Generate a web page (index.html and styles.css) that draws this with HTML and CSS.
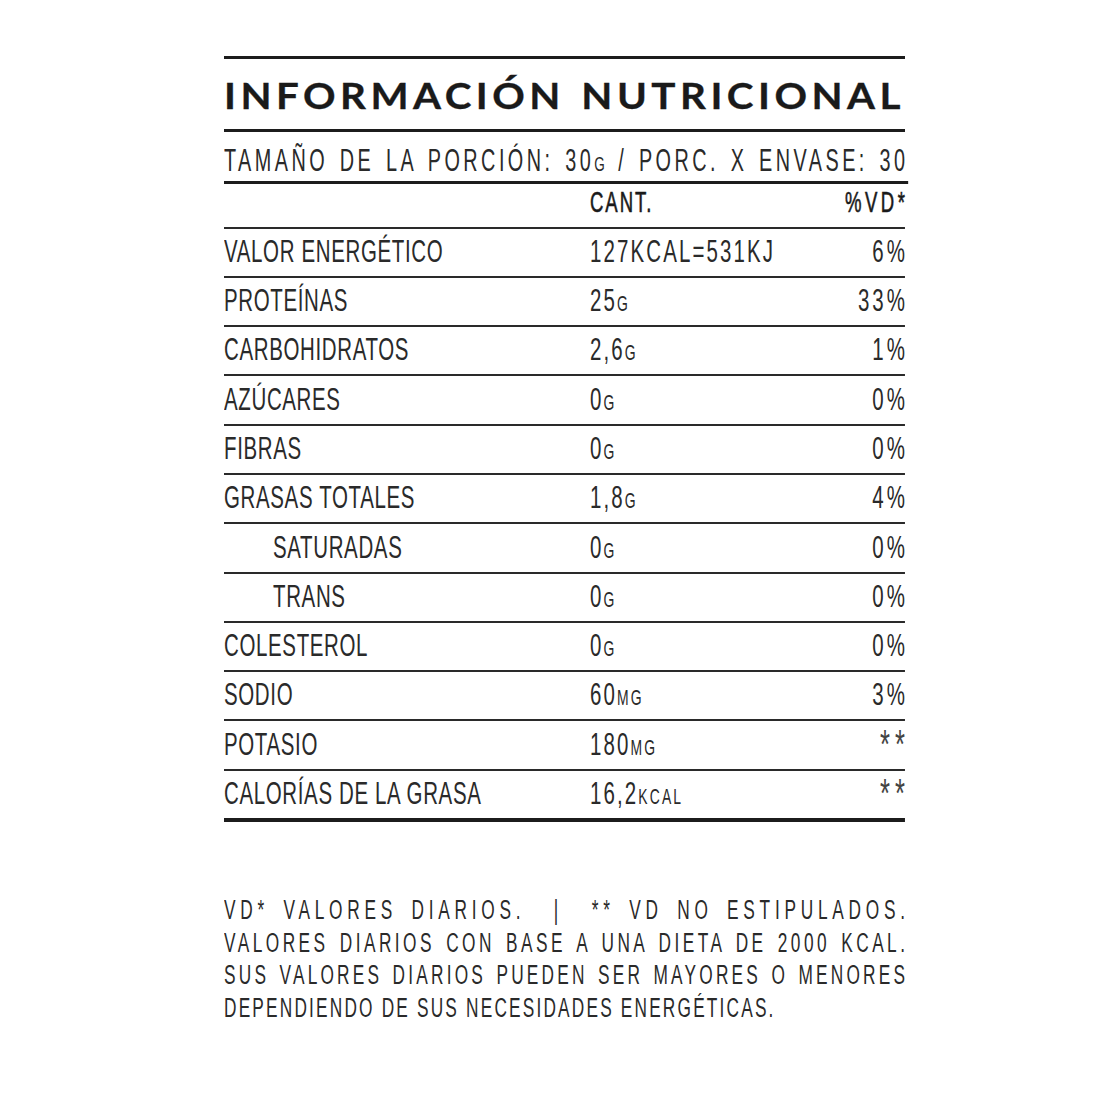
FILE: index.html
```html
<!DOCTYPE html>
<html lang="es">
<head>
<meta charset="utf-8">
<title>Información nutricional</title>
<link rel="stylesheet" href="styles.css">
</head>
<body>
<div class="sheet">
  <h1 class="title"><span class="title-text">INFORMACIÓN NUTRICIONAL</span></h1>
  <div class="cond">
    <p class="serving">TAMAÑO DE LA PORCIÓN: 30<small class="u">G</small> / PORC. X ENVASE: 30</p>
    <div class="head">
      <span></span>
      <span class="h-amt">CANT.</span>
      <span class="h-pct">%VD*</span>
    </div>
    <div class="row"><span class="lbl">VALOR ENERGÉTICO</span><span class="amt">127KCAL=531KJ</span><span class="pct">6%</span></div>
    <div class="row"><span class="lbl">PROTEÍNAS</span><span class="amt">25<small class="u">G</small></span><span class="pct">33%</span></div>
    <div class="row"><span class="lbl">CARBOHIDRATOS</span><span class="amt">2,6<small class="u">G</small></span><span class="pct">1%</span></div>
    <div class="row"><span class="lbl">AZÚCARES</span><span class="amt">0<small class="u">G</small></span><span class="pct">0%</span></div>
    <div class="row"><span class="lbl">FIBRAS</span><span class="amt">0<small class="u">G</small></span><span class="pct">0%</span></div>
    <div class="row"><span class="lbl">GRASAS TOTALES</span><span class="amt">1,8<small class="u">G</small></span><span class="pct">4%</span></div>
    <div class="row"><span class="lbl sub">SATURADAS</span><span class="amt">0<small class="u">G</small></span><span class="pct">0%</span></div>
    <div class="row"><span class="lbl sub">TRANS</span><span class="amt">0<small class="u">G</small></span><span class="pct">0%</span></div>
    <div class="row"><span class="lbl">COLESTEROL</span><span class="amt">0<small class="u">G</small></span><span class="pct">0%</span></div>
    <div class="row"><span class="lbl">SODIO</span><span class="amt">60<small class="u">MG</small></span><span class="pct">3%</span></div>
    <div class="row"><span class="lbl">POTASIO</span><span class="amt">180<small class="u">MG</small></span><span class="pct star">**</span></div>
    <div class="row last"><span class="lbl">CALORÍAS DE LA GRASA</span><span class="amt">16,2<small class="u">KCAL</small></span><span class="pct star">**</span></div>

    <div class="notes">
      <p class="n1">VD* VALORES DIARIOS. <span class="bar">|</span> ** VD NO ESTIPULADOS.</p>
      <p class="n2">VALORES DIARIOS CON BASE A UNA DIETA DE 2000 KCAL.</p>
      <p class="n3">SUS VALORES DIARIOS PUEDEN SER MAYORES O MENORES</p>
      <p class="n4">DEPENDIENDO DE SUS NECESIDADES ENERGÉTICAS.</p>
    </div>
  </div>
</div>
</body>
</html>
```

FILE: styles.css
```css
* { box-sizing: border-box; }

html, body {
  margin: 0;
  padding: 0;
  background: #ffffff;
  overflow-x: hidden;
}

.sheet {
  margin: 56px 0 0 224px;
  width: 681px;
  border-top: 3px solid #1c1c1c;
  color: #2a2a2a;
}

.title {
  margin: 0;
  height: 73px;
  padding-top: 17.6px;
  border-bottom: 3px solid #1c1c1c;
  font-family: Lato, "Open Sans", sans-serif;
  font-weight: 700;
  font-size: 36px;
  line-height: 36px;
  color: #1a1a1a;
}

/* wide geometric look: laid out narrower, stretched to the sheet width */
.title-text {
  display: block;
  width: 608px;
  margin-right: -4px;
  letter-spacing: 4px;
  text-align: justify;
  text-align-last: justify;
  white-space: normal;
  transform: scaleX(1.12);
  transform-origin: 0 0;
  -webkit-text-stroke: 0.3px #1a1a1a;
}

/* condensed block: laid out wide, then narrowed to the sheet width */
.cond {
  width: 1064.06px;
  transform: scaleX(0.64);
  transform-origin: 0 0;
  font-family: "Liberation Sans", Arial, sans-serif;
  font-weight: 400;
}

.u {
  font-size: 0.68em;
}

.serving {
  margin: 0 -5.4px 0 0;
  height: 52px;
  padding-top: 13px;
  border-bottom: 3px solid #1c1c1c;
  font-size: 31px;
  line-height: 31px;
  letter-spacing: 5.4px;
  text-align: justify;
  text-align-last: justify;
}

.serving .u {
  letter-spacing: 3px;
}

.head {
  display: grid;
  grid-template-columns: 571.9px 1fr auto;
  height: 42.5px;
  padding-top: 4px;
  font-size: 29px;
  line-height: 29px;
  color: #1a1a1a;
  -webkit-text-stroke: 0.6px #1a1a1a;
}

.h-amt {
  letter-spacing: 3px;
}

.h-pct {
  letter-spacing: 5.5px;
  margin-right: -5.5px;
}

.row {
  display: grid;
  grid-template-columns: 571.9px 1fr auto;
  height: 49.3px;
  padding-top: 6.3px;
  border-top: 2px solid #2a2a2a;
  font-size: 32px;
  line-height: 32px;
  white-space: nowrap;
}

.row.last {
  height: 53.3px;
  border-bottom: 4px solid #1c1c1c;
}

.lbl {
  letter-spacing: 1px;
}

.lbl.sub {
  padding-left: 76.6px;
}

.amt {
  letter-spacing: 3.3px;
}

.pct {
  letter-spacing: 4.7px;
  margin-right: -4.7px;
  text-align: right;
}

.pct.star {
  font-size: 40px;
  line-height: 32px;
  letter-spacing: 8px;
  margin-right: -8px;
  color: #444;
}

.notes {
  margin-top: 72px;
  font-size: 27px;
  line-height: 32.5px;
}

.notes p {
  margin: 0;
}

.n1 {
  letter-spacing: 7.4px;
  margin-right: -7.4px !important;
  text-align: justify;
  text-align-last: justify;
}

.bar {
  margin: 0 22px;
}

.n2 {
  letter-spacing: 5.4px;
  margin-right: -5.4px !important;
  text-align: justify;
  text-align-last: justify;
}

.n3 {
  letter-spacing: 5px;
  margin-right: -5px !important;
  text-align: justify;
  text-align-last: justify;
}

.n4 {
  letter-spacing: 3.4px;
}
```
